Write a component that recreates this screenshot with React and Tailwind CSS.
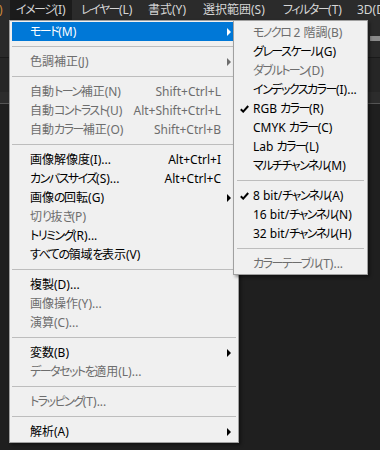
import React from 'react';

const FONT = "font-['Noto_Sans','Noto_Sans_CJK_JP',sans-serif] [font-feature-settings:'palt']";

const SEP = { sep: true };

const mainItems = [
  { t: 'モード(M)', hl: true, arrow: true },
  SEP,
  { t: '色調補正(J)', dis: true, arrow: true },
  SEP,
  { t: '自動トーン補正(N)', dis: true, sc: 'Shift+Ctrl+L' },
  { t: '自動コントラスト(U)', dis: true, sc: 'Alt+Shift+Ctrl+L' },
  { t: '自動カラー補正(O)', dis: true, sc: 'Shift+Ctrl+B' },
  SEP,
  { t: '画像解像度(I)...', sc: 'Alt+Ctrl+I' },
  { t: 'カンバスサイズ(S)...', sc: 'Alt+Ctrl+C' },
  { t: '画像の回転(G)', arrow: true },
  { t: '切り抜き(P)', dis: true },
  { t: 'トリミング(R)...' },
  { t: 'すべての領域を表示(V)' },
  SEP,
  { t: '複製(D)...' },
  { t: '画像操作(Y)...', dis: true },
  { t: '演算(C)...', dis: true },
  SEP,
  { t: '変数(B)', arrow: true },
  { t: 'データセットを適用(L)...', dis: true },
  SEP,
  { t: 'トラッピング(T)...', dis: true },
  SEP,
  { t: '解析(A)', arrow: true },
];

const subItems = [
  { t: 'モノクロ 2 階調(B)', dis: true },
  { t: 'グレースケール(G)' },
  { t: 'ダブルトーン(D)', dis: true },
  { t: 'インデックスカラー(I)...' },
  { t: 'RGB カラー(R)', check: true },
  { t: 'CMYK カラー(C)' },
  { t: 'Lab カラー(L)' },
  { t: 'マルチチャンネル(M)' },
  SEP,
  { t: '8 bit/チャンネル(A)', check: true },
  { t: '16 bit/チャンネル(N)' },
  { t: '32 bit/チャンネル(H)' },
  SEP,
  { t: 'カラーテーブル(T)...', dis: true },
];

function JText({ text }) {
  const parts = text.split(/([\u3040-\u30FF]+)/);
  return (
    <>
      {parts.map((p, i) =>
        /[\u3040-\u30FF]/.test(p) ? (
          <span key={i} className="tracking-[-1.5px]">{p}</span>
        ) : (
          <React.Fragment key={i}>{p}</React.Fragment>
        )
      )}
    </>
  );
}

function Arrow({ color }) {
  return (
    <svg width="4" height="8" viewBox="0 0 4 8" className="absolute right-[5px] top-[6px]">
      <polygon points="0,0 4,4 0,8" fill={color} />
    </svg>
  );
}

function Check() {
  return (
    <svg width="9" height="8" viewBox="0 0 9 8" className="absolute left-[6px] top-[6px]">
      <path d="M0.8 4.2 L3.2 6.6 L8.2 1" stroke="#000" strokeWidth="2" fill="none" />
    </svg>
  );
}

function MainRow({ it }) {
  if (it.sep) {
    return (
      <div className="h-[11px] flex items-center">
        <div className="h-px w-full bg-[#bdbdbd]" />
      </div>
    );
  }
  const color = it.hl ? 'text-white bg-[#0078d7]' : it.dis ? 'text-[#6d6d6d]' : 'text-black';
  const arrowColor = it.hl ? '#ffffff' : it.dis ? '#6d6d6d' : '#000000';
  return (
    <div className={`relative h-[19px] flex items-center ${color}`}>
      <span className="flex-1 pl-[18px] whitespace-nowrap"><JText text={it.t} /></span>
      {it.sc && <span className="pr-[15px] whitespace-nowrap">{it.sc}</span>}
      {it.arrow && <Arrow color={arrowColor} />}
    </div>
  );
}

function SubRow({ it }) {
  if (it.sep) {
    return (
      <div className="h-[11px] flex items-center px-[3px]">
        <div className="h-px w-full bg-[#bdbdbd]" />
      </div>
    );
  }
  const color = it.dis ? 'text-[#6d6d6d]' : 'text-black';
  return (
    <div className={`relative h-[19px] flex items-center ${color}`}>
      {it.check && <Check />}
      <span className="pl-[19px] whitespace-nowrap"><JText text={it.t} /></span>
    </div>
  );
}

export default function App() {
  return (
    <div className={`relative w-[380px] h-[450px] overflow-hidden bg-[#1f1f1f] text-[12px] leading-[16px] ${FONT}`}>
      {/* menu bar */}
      <div className="h-[20px] bg-[#2b2b2b] flex items-center text-[#d6d6d6] whitespace-nowrap">
        <span className="w-[10px] shrink-0 overflow-hidden text-[#d08a3a]"><span className="ml-[-1px]">)</span></span>
        <span className="w-[62px] shrink-0 h-[20px] flex items-center pl-[6px] bg-[#1b1b1b]"><JText text="イメージ(I)" /></span>
        <span className="w-[2px] shrink-0" />
        <span className="w-[67px] shrink-0 h-[20px] flex items-center pl-[7px]"><JText text="レイヤー(L)" /></span>
        <span className="w-[55px] shrink-0 h-[20px] flex items-center pl-[7px]">書式(Y)</span>
        <span className="w-[80px] shrink-0 h-[20px] flex items-center pl-[7px]">選択範囲(S)</span>
        <span className="w-[74px] shrink-0 h-[20px] flex items-center pl-[7px]"><JText text="フィルター(T)" /></span>
        <span className="shrink-0 h-[20px] flex items-center pl-[7px]">3D(D)</span>
      </div>
      {/* canvas background */}
      <div className="flex flex-col">
        <div className="h-[38px] bg-[#2a2a2a] border-b border-[#1a1a1a] flex justify-end items-center">
          <div className="w-[10px] h-[5px] bg-[#8a8a8a]" />
        </div>
        <div className="h-[34px] bg-[#262626]" />
        <div className="h-[12px] bg-[#2c2c2c] border-b border-[#555]" />
      </div>

      {/* main dropdown */}
      <div className="absolute left-[9px] top-[20px] w-[230px] border border-[#a0a0a0] bg-[#f0f0f0] px-[2px] pt-[1px] pb-[1px] shadow-[2px_2px_3px_rgba(0,0,0,0.4)]">
        {mainItems.map((it, i) => (
          <MainRow key={i} it={it} />
        ))}
      </div>

      {/* submenu */}
      <div className="absolute left-[233px] top-[20px] w-[135px] border border-[#a0a0a0] bg-[#f0f0f0] pt-[2px] pb-[1px] shadow-[2px_2px_3px_rgba(0,0,0,0.4)]">
        {subItems.map((it, i) => (
          <SubRow key={i} it={it} />
        ))}
      </div>
    </div>
  );
}
